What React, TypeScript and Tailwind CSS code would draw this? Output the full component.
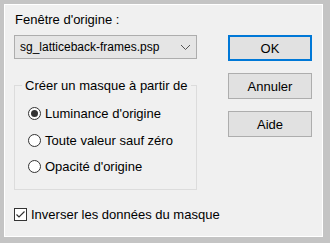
import React from "react";

function Radio({ checked, label }: { checked?: boolean; label: string }) {
  return (
    <div className="flex items-center h-[15px]">
      <div className="w-[13px] h-[13px] shrink-0 rounded-full border border-[#333333] bg-white flex items-center justify-center">
        {checked && <div className="w-[7px] h-[7px] rounded-full bg-[#333333]" />}
      </div>
      <span className="ml-[4px] whitespace-nowrap">{label}</span>
    </div>
  );
}

export default function App() {
  return (
    <div
      className="w-[330px] h-[243px] bg-[#c4c4c4] pt-[4px] pl-[4px] pr-[7px] pb-[6px] flex text-[13px] leading-[15px] text-black"
      style={{ fontFamily: '"Liberation Sans", Arial, sans-serif' }}
    >
      <div className="flex-1 border border-white bg-[#f0f0f0] flex pl-[9px] pt-[7px]">
        <div className="w-[183px] flex flex-col">
          <div className="pl-[1px] whitespace-nowrap">Fenêtre d'origine :</div>
          <div className="mt-[8px] h-[24px] border border-[#adadad] bg-[#e5e5e5] flex items-center pl-[5px] pr-[4px] text-[12px]">
            <span className="flex-1 whitespace-nowrap">sg_latticeback-frames.psp</span>
            <svg width="11" height="7" viewBox="0 0 11 7" className="mr-[1px]">
              <path d="M1 1 L5.5 5.5 L10 1" fill="none" stroke="#555" strokeWidth="1" />
            </svg>
          </div>
          <fieldset className="mt-[19px] border border-[#dcdcdc] h-[112px]">
            <legend className="ml-[7px] px-[3px] whitespace-nowrap">Créer un masque à partir de</legend>
            <div className="flex flex-col gap-[11.5px] mt-[13px] pl-[13px]">
              <Radio checked label="Luminance d'origine" />
              <Radio label="Toute valeur sauf zéro" />
              <Radio label="Opacité d'origine" />
            </div>
          </fieldset>
          <div className="mt-[17px] flex items-center">
            <div className="w-[13px] h-[13px] shrink-0 border border-[#333333] bg-white flex items-center justify-center">
              <svg width="11" height="11" viewBox="0 0 11 11">
                <path d="M1.5 5.5 L4 8 L9.5 2.5" fill="none" stroke="#333" strokeWidth="1.2" />
              </svg>
            </div>
            <span className="ml-[4px] whitespace-nowrap">Inverser les données du masque</span>
          </div>
        </div>
        <div className="ml-[31px] w-[84px] flex flex-col gap-[12px] mt-[23px]">
          <div className="h-[26px] border-2 border-[#0078d7] bg-[#e1e1e1] flex items-center justify-center">OK</div>
          <div className="h-[26px] border border-[#adadad] bg-[#e1e1e1] flex items-center justify-center">Annuler</div>
          <div className="h-[26px] border border-[#adadad] bg-[#e1e1e1] flex items-center justify-center">Aide</div>
        </div>
      </div>
    </div>
  );
}
